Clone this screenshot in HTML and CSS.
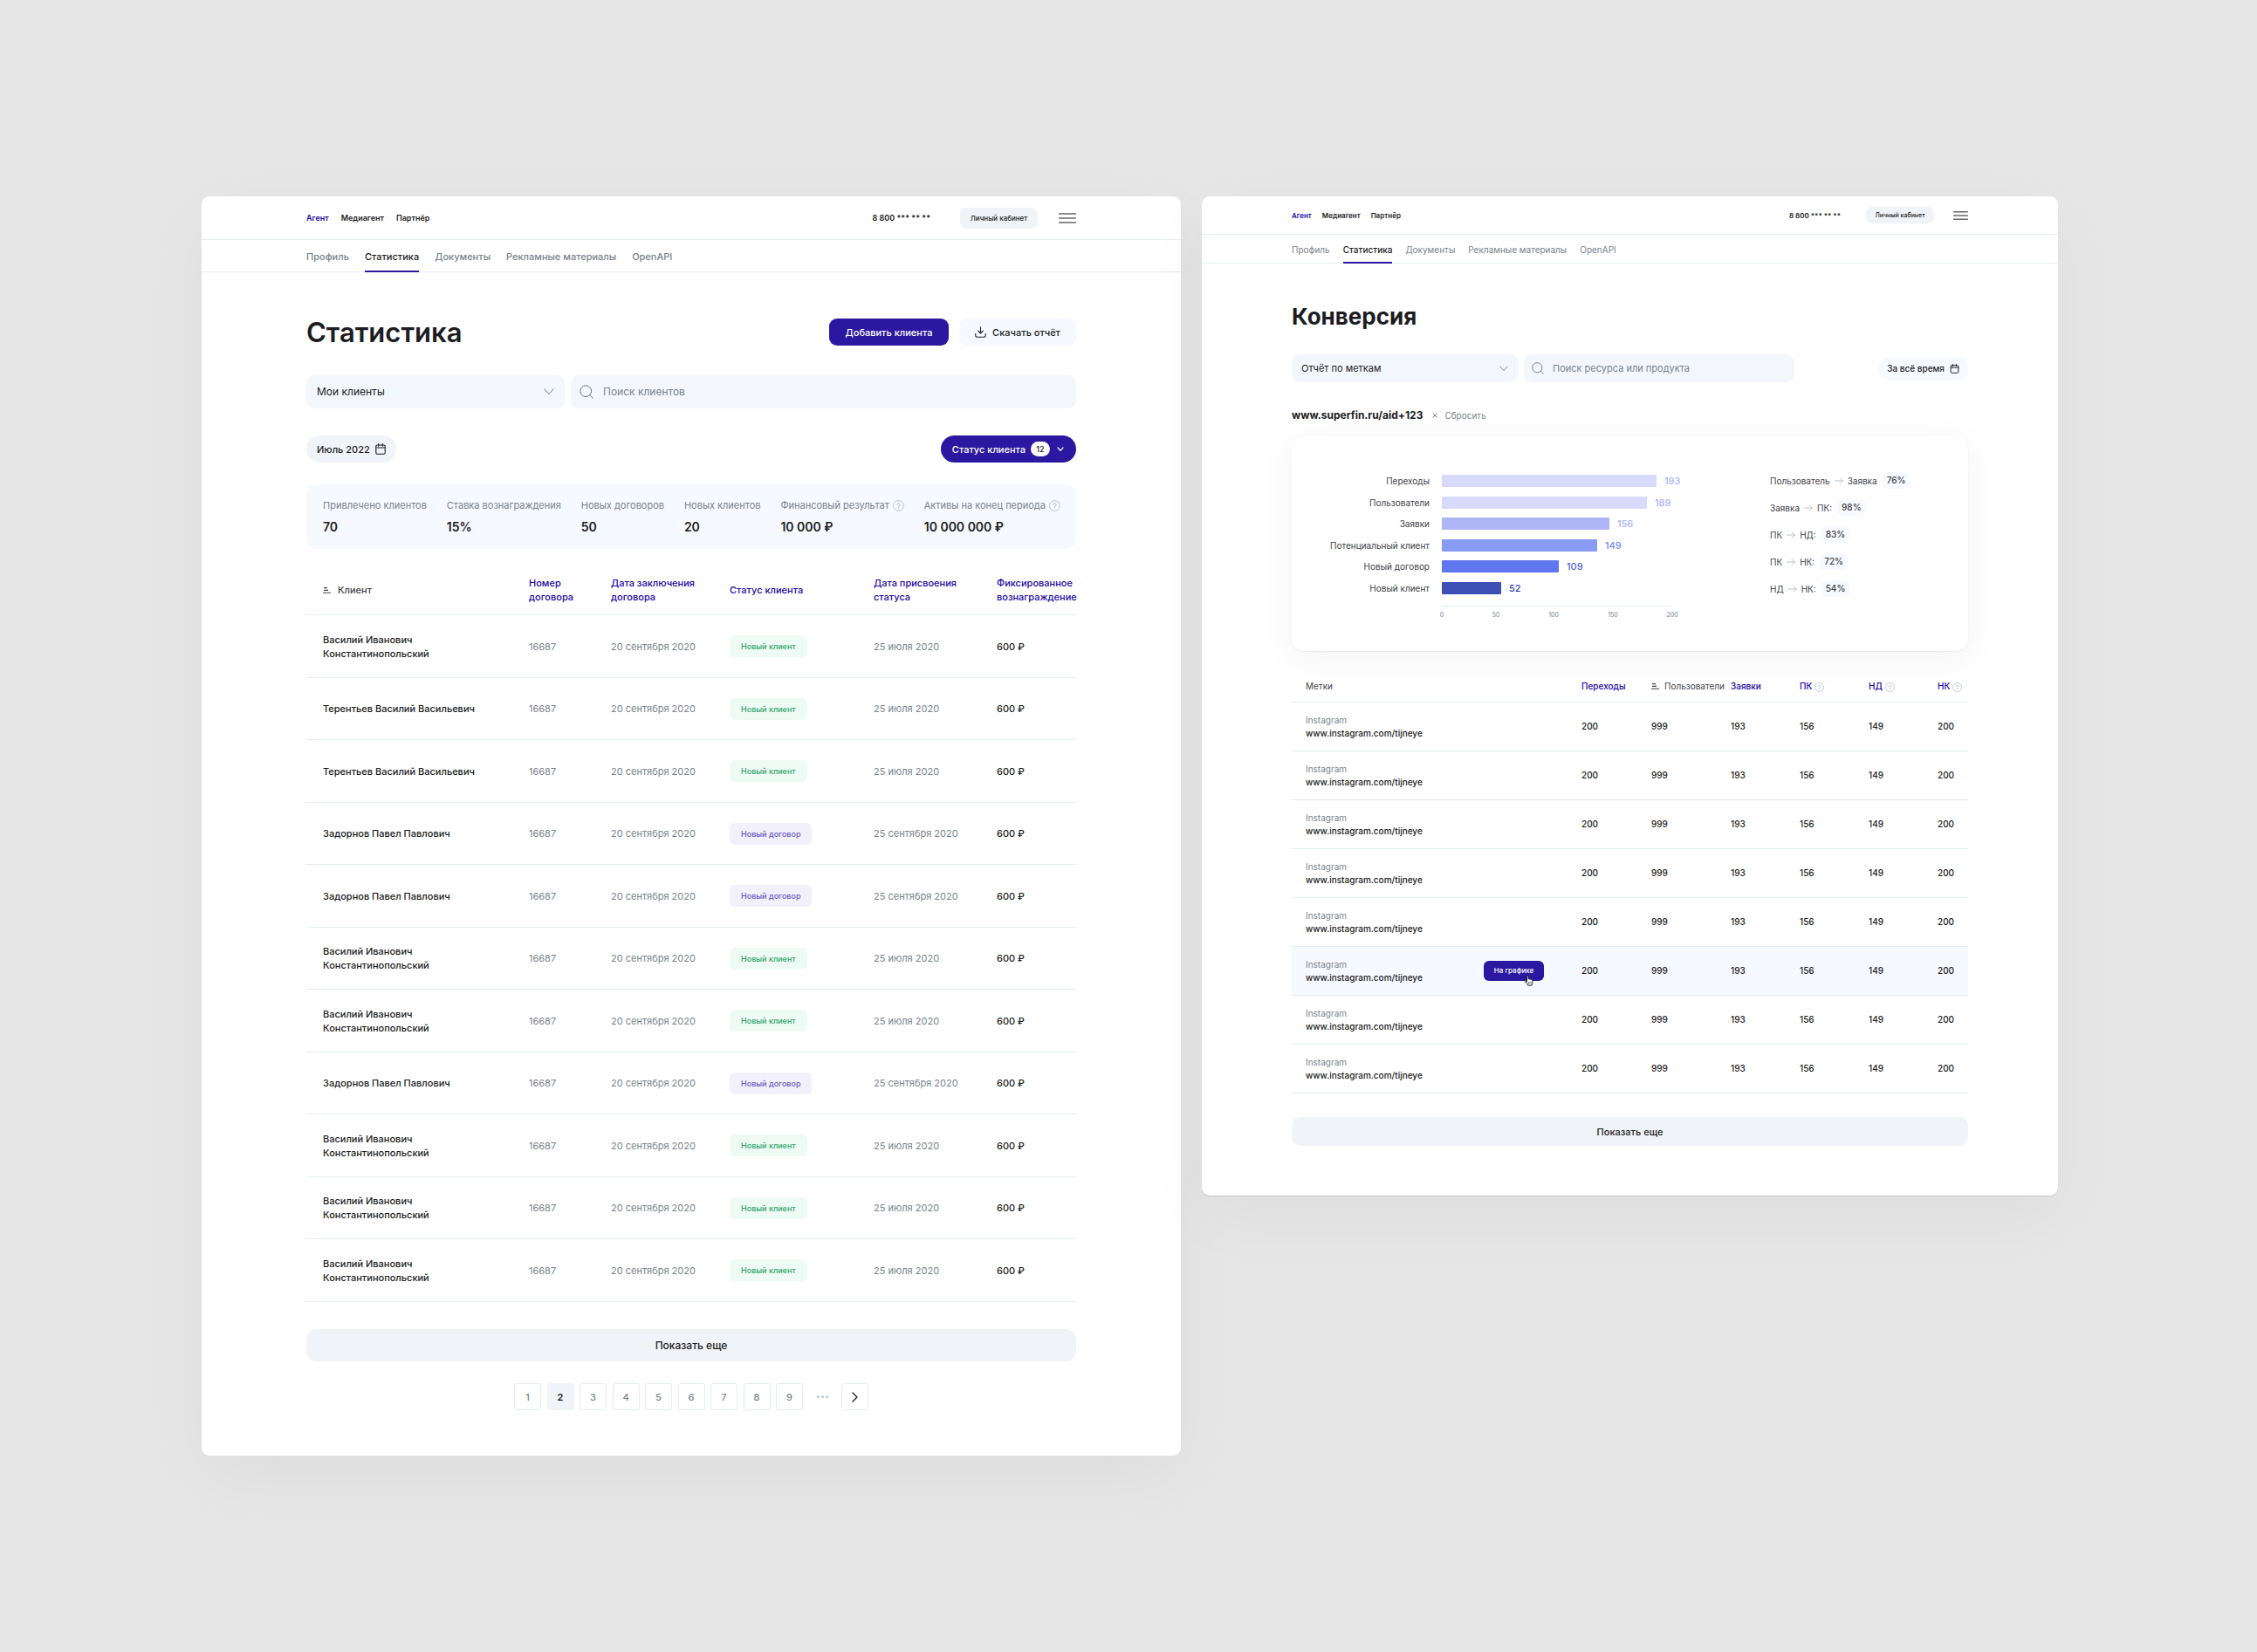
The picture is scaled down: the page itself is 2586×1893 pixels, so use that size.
FILE: index.html
```html
<!DOCTYPE html>
<html lang="ru">
<head>
<meta charset="utf-8">
<meta name="viewport" content="width=device-width, initial-scale=1">
<title>Статистика и конверсия</title>
<link rel="stylesheet" href="styles.css">
</head>
<body>
<svg class="sprite" aria-hidden="true">
  <symbol id="burger" viewBox="0 0 20 12"><path d="M0 1h20M0 6h20M0 11h20" stroke="currentColor" stroke-width="1.2" fill="none"/></symbol>
  <symbol id="chevron" viewBox="0 0 12 8"><path d="M1 1l5 5.5L11 1" stroke="currentColor" fill="none" stroke-linecap="round" stroke-linejoin="round"/></symbol>
  <symbol id="chevron-small" viewBox="0 0 8 6"><path d="M1 1l3 3.3L7 1" stroke="currentColor" stroke-width="1.2" fill="none" stroke-linecap="round" stroke-linejoin="round"/></symbol>
  <symbol id="search" viewBox="0 0 16 16"><circle cx="7.2" cy="7.2" r="6.4" stroke="currentColor" fill="none"/><path d="M11.8 11.8l3.4 3.4" stroke="currentColor" stroke-linecap="round"/></symbol>
  <symbol id="calendar" viewBox="0 0 12 13"><path d="M2.2 2h7.6c.8 0 1.4.6 1.4 1.4v7.4c0 .8-.6 1.4-1.4 1.4H2.2c-.8 0-1.4-.6-1.4-1.4V3.4C.8 2.600 1.400 2 2.200 2zM1 5h10M3.700.6v2.600M8.300.6v2.600" stroke="currentColor" stroke-width="1.1" fill="none" stroke-linecap="round"/></symbol>
  <symbol id="download" viewBox="0 0 13 13"><path d="M6.500.7v7M3.600 5.200l2.900 2.800 2.900-2.800M.8 8.300v2.200c0 1 .7 1.700 1.700 1.700h8c1 0 1.700-.7 1.700-1.700V8.300" stroke="currentColor" stroke-width="1.1" fill="none" stroke-linecap="round" stroke-linejoin="round"/></symbol>
  <symbol id="help" viewBox="0 0 13 13"><circle cx="6.500" cy="6.500" r="5.900" stroke="currentColor" fill="none"/><path d="M4.900 5.300c.1-1 .8-1.500 1.700-1.500s1.600.6 1.600 1.400c0 1.100-1.600 1.200-1.600 2.300M6.600 8.900v.5" stroke="currentColor" stroke-width="1.1" fill="none" stroke-linecap="round"/></symbol>
  <symbol id="sort" viewBox="0 0 9 7"><path d="M1 .6h4M1 3.400h5M0 6.200h9" stroke="currentColor" stroke-width="1.1" fill="none"/></symbol>
  <symbol id="arrow" viewBox="0 0 10 8"><path d="M.5 4h9M6 .8L9.400 4 6 7.200" stroke="currentColor" fill="none" stroke-linecap="round" stroke-linejoin="round"/></symbol>
  <symbol id="cross" viewBox="0 0 6 6"><path d="M.5.5l5 5M5.500.5l-5 5" stroke="currentColor" fill="none"/></symbol>
  <symbol id="next" viewBox="0 0 7 12"><path d="M1 1l5 5-5 5" stroke="currentColor" stroke-width="1.300" fill="none" stroke-linecap="round" stroke-linejoin="round"/></symbol>
  <symbol id="hand" viewBox="0 0 12 13"><path d="M3.400 8.300V1.900c0-1.300 1.700-1.300 1.700 0v3.200c.3-.9 1.600-.7 1.700.2.300-.8 1.500-.6 1.600.2.400-.6 1.500-.4 1.500.6v2.700c0 1.300-.7 1.700-.7 3.300H4.500c0-1.300-1.200-2.100-3.300-4.700-.8-1 .4-1.900 1.200-1.100z" fill="#fff" stroke="#111" stroke-width=".9" stroke-linejoin="round"/><path d="M5.500 8.200v2.200M6.900 8.200v2.200M8.200 8.200v2.200" stroke="#111" stroke-width=".6"/></symbol>
</svg>

<main class="board">

<article class="panel panel-stats">
  <header class="topbar">
    <nav class="roles"><a href="#" class="on">Агент</a><a href="#">Медиагент</a><a href="#">Партнёр</a></nav>
    <span class="phone">8 800 *** ** **</span>
    <button class="cabinet">Личный кабинет</button>
    <button class="burger" aria-label="Меню"><svg><use href="#burger"/></svg></button>
  </header>
  <nav class="tabs"><a href="#">Профиль</a><a href="#" class="on">Статистика</a><a href="#">Документы</a><a href="#">Рекламные материалы</a><a href="#">OpenAPI</a></nav>

  <section class="content">
    <div class="heading">
      <h1>Статистика</h1>
      <button class="btn primary">Добавить клиента</button>
      <button class="btn light"><svg class="i-download"><use href="#download"/></svg>Скачать отчёт</button>
    </div>

    <div class="fields">
      <div class="select"><select aria-label="Список клиентов"><option>Мои клиенты</option></select><svg class="i-chevron"><use href="#chevron"/></svg></div>
      <label class="search"><svg class="i-search"><use href="#search"/></svg><input type="text" placeholder="Поиск клиентов" aria-label="Поиск клиентов"></label>
    </div>

    <div class="filters">
      <button class="pill">Июль 2022<svg class="i-calendar"><use href="#calendar"/></svg></button>
      <button class="pill status">Статус клиента<span class="count">12</span><svg class="i-small"><use href="#chevron-small"/></svg></button>
    </div>

    <dl class="summary">
      <div><dt>Привлечено клиентов</dt><dd>70</dd></div>
      <div><dt>Ставка вознаграждения</dt><dd>15%</dd></div>
      <div><dt>Новых договоров</dt><dd>50</dd></div>
      <div><dt>Новых клиентов</dt><dd>20</dd></div>
      <div><dt>Финансовый результат<svg class="i-help"><use href="#help"/></svg></dt><dd>10 000 ₽</dd></div>
      <div><dt>Активы на конец периода<svg class="i-help"><use href="#help"/></svg></dt><dd>10 000 000 ₽</dd></div>
    </dl>

    <table class="clients">
      <colgroup><col><col class="c-number"><col class="c-date"><col class="c-status"><col class="c-set"><col class="c-fee"></colgroup>
      <thead><tr><th class="sorted"><svg class="i-sort"><use href="#sort"/></svg>Клиент</th><th>Номер<br>договора</th><th>Дата заключения<br>договора</th><th>Статус клиента</th><th>Дата присвоения<br>статуса</th><th>Фиксированное<br>вознаграждение</th></tr></thead>
      <tbody>
        <tr><td>Василий Иванович<br>Константинопольский</td><td>16687</td><td>20 сентября 2020</td><td><span class="tag">Новый клиент</span></td><td>25 июля 2020</td><td>600 ₽</td></tr>
        <tr><td>Терентьев Василий Васильевич</td><td>16687</td><td>20 сентября 2020</td><td><span class="tag">Новый клиент</span></td><td>25 июля 2020</td><td>600 ₽</td></tr>
        <tr><td>Терентьев Василий Васильевич</td><td>16687</td><td>20 сентября 2020</td><td><span class="tag">Новый клиент</span></td><td>25 июля 2020</td><td>600 ₽</td></tr>
        <tr><td>Задорнов Павел Павлович</td><td>16687</td><td>20 сентября 2020</td><td><span class="tag deal">Новый договор</span></td><td>25 сентября 2020</td><td>600 ₽</td></tr>
        <tr><td>Задорнов Павел Павлович</td><td>16687</td><td>20 сентября 2020</td><td><span class="tag deal">Новый договор</span></td><td>25 сентября 2020</td><td>600 ₽</td></tr>
        <tr><td>Василий Иванович<br>Константинопольский</td><td>16687</td><td>20 сентября 2020</td><td><span class="tag">Новый клиент</span></td><td>25 июля 2020</td><td>600 ₽</td></tr>
        <tr><td>Василий Иванович<br>Константинопольский</td><td>16687</td><td>20 сентября 2020</td><td><span class="tag">Новый клиент</span></td><td>25 июля 2020</td><td>600 ₽</td></tr>
        <tr><td>Задорнов Павел Павлович</td><td>16687</td><td>20 сентября 2020</td><td><span class="tag deal">Новый договор</span></td><td>25 сентября 2020</td><td>600 ₽</td></tr>
        <tr><td>Василий Иванович<br>Константинопольский</td><td>16687</td><td>20 сентября 2020</td><td><span class="tag">Новый клиент</span></td><td>25 июля 2020</td><td>600 ₽</td></tr>
        <tr><td>Василий Иванович<br>Константинопольский</td><td>16687</td><td>20 сентября 2020</td><td><span class="tag">Новый клиент</span></td><td>25 июля 2020</td><td>600 ₽</td></tr>
        <tr><td>Василий Иванович<br>Константинопольский</td><td>16687</td><td>20 сентября 2020</td><td><span class="tag">Новый клиент</span></td><td>25 июля 2020</td><td>600 ₽</td></tr>
      </tbody>
    </table>

    <button class="more">Показать еще</button>

    <nav class="pages" aria-label="Страницы">
      <a href="#">1</a><a href="#" class="on" aria-current="page">2</a><a href="#">3</a><a href="#">4</a><a href="#">5</a><a href="#">6</a><a href="#">7</a><a href="#">8</a><a href="#">9</a>
      <span class="dots"><i></i><i></i><i></i></span>
      <a href="#" class="next" aria-label="Дальше"><svg><use href="#next"/></svg></a>
    </nav>
  </section>
</article>

<article class="panel panel-conversion">
  <header class="topbar">
    <nav class="roles"><a href="#" class="on">Агент</a><a href="#">Медиагент</a><a href="#">Партнёр</a></nav>
    <span class="phone">8 800 *** ** **</span>
    <button class="cabinet">Личный кабинет</button>
    <button class="burger" aria-label="Меню"><svg><use href="#burger"/></svg></button>
  </header>
  <nav class="tabs"><a href="#">Профиль</a><a href="#" class="on">Статистика</a><a href="#">Документы</a><a href="#">Рекламные материалы</a><a href="#">OpenAPI</a></nav>

  <section class="content">
    <div class="heading"><h1>Конверсия</h1></div>

    <div class="fields">
      <div class="select"><select aria-label="Вид отчёта"><option>Отчёт по меткам</option></select><svg class="i-chevron"><use href="#chevron"/></svg></div>
      <label class="search"><svg class="i-search"><use href="#search"/></svg><input type="text" placeholder="Поиск ресурса или продукта" aria-label="Поиск ресурса или продукта"></label>
      <button class="pill">За всё время<svg class="i-calendar"><use href="#calendar"/></svg></button>
    </div>

    <div class="source"><h2>www.superfin.ru/aid+123</h2><button class="reset"><svg class="i-cross"><use href="#cross"/></svg>Сбросить</button></div>

    <div class="card">
      <div class="chart">
        <ul class="bars">
          <li class="b1"><span class="name">Переходы</span><span class="bar" style="width:246px"></span><span class="value">193</span></li>
          <li class="b2"><span class="name">Пользователи</span><span class="bar" style="width:235px"></span><span class="value">189</span></li>
          <li class="b3"><span class="name">Заявки</span><span class="bar" style="width:192px"></span><span class="value">156</span></li>
          <li class="b4"><span class="name">Потенциальный клиент</span><span class="bar" style="width:178px"></span><span class="value">149</span></li>
          <li class="b5"><span class="name">Новый договор</span><span class="bar" style="width:134px"></span><span class="value">109</span></li>
          <li class="b6"><span class="name">Новый клиент</span><span class="bar" style="width:68px"></span><span class="value">52</span></li>
        </ul>
        <div class="axis"><span>0</span><span>50</span><span>100</span><span>150</span><span>200</span></div>
      </div>
      <ul class="steps">
        <li>Пользователь<svg class="i-arrow"><use href="#arrow"/></svg>Заявка<b>76%</b></li>
        <li>Заявка<svg class="i-arrow"><use href="#arrow"/></svg>ПК:<b>98%</b></li>
        <li>ПК<svg class="i-arrow"><use href="#arrow"/></svg>НД:<b>83%</b></li>
        <li>ПК<svg class="i-arrow"><use href="#arrow"/></svg>НК:<b>72%</b></li>
        <li>НД<svg class="i-arrow"><use href="#arrow"/></svg>НК:<b>54%</b></li>
      </ul>
    </div>

    <table class="marks">
      <colgroup><col><col class="c-visits"><col class="c-users"><col class="c-step"><col class="c-step"><col class="c-step"><col class="c-last"></colgroup>
      <thead><tr><th class="plain">Метки</th><th>Переходы</th><th class="sorted"><svg class="i-sort"><use href="#sort"/></svg>Пользователи</th><th>Заявки</th><th>ПК<svg class="i-help"><use href="#help"/></svg></th><th>НД<svg class="i-help"><use href="#help"/></svg></th><th>НК<svg class="i-help"><use href="#help"/></svg></th></tr></thead>
      <tbody>
        <tr><td><small>Instagram</small><a href="#">www.instagram.com/tijneye</a></td><td>200</td><td>999</td><td>193</td><td>156</td><td>149</td><td>200</td></tr>
        <tr><td><small>Instagram</small><a href="#">www.instagram.com/tijneye</a></td><td>200</td><td>999</td><td>193</td><td>156</td><td>149</td><td>200</td></tr>
        <tr><td><small>Instagram</small><a href="#">www.instagram.com/tijneye</a></td><td>200</td><td>999</td><td>193</td><td>156</td><td>149</td><td>200</td></tr>
        <tr><td><small>Instagram</small><a href="#">www.instagram.com/tijneye</a></td><td>200</td><td>999</td><td>193</td><td>156</td><td>149</td><td>200</td></tr>
        <tr><td><small>Instagram</small><a href="#">www.instagram.com/tijneye</a></td><td>200</td><td>999</td><td>193</td><td>156</td><td>149</td><td>200</td></tr>
        <tr class="active"><td><div class="mark"><div><small>Instagram</small><a href="#">www.instagram.com/tijneye</a></div><button class="show">На графике<svg class="i-hand"><use href="#hand"/></svg></button></div></td><td>200</td><td>999</td><td>193</td><td>156</td><td>149</td><td>200</td></tr>
        <tr><td><small>Instagram</small><a href="#">www.instagram.com/tijneye</a></td><td>200</td><td>999</td><td>193</td><td>156</td><td>149</td><td>200</td></tr>
        <tr><td><small>Instagram</small><a href="#">www.instagram.com/tijneye</a></td><td>200</td><td>999</td><td>193</td><td>156</td><td>149</td><td>200</td></tr>
      </tbody>
    </table>

    <button class="more">Показать еще</button>
  </section>
</article>

</main>
</body>
</html>
```
FILE: styles.css
```css
:root {
  --ink: #1c1c22;
  --soft: #3f4249;
  --muted: #7a838c;
  --accent: #2c17a0;
  --link: #2107a6;
  --line: #e4edf0;
  --field: #f3f7fc;
  --pale: #f6f9ff;
  --grey: #f0f3f7;
  --icon: #b9c3cb;
}

* { box-sizing: border-box; margin: 0; padding: 0; }

body {
  background: #e6e6e6;
  color: var(--ink);
  font: 500 11px/16px Inter, "Liberation Sans", sans-serif;
}

a { color: inherit; text-decoration: none; }
button, input, select { font: inherit; color: inherit; border: 0; background: none; }
button { display: flex; align-items: center; justify-content: center; cursor: pointer; }
svg { display: block; flex: none; }
ul { list-style: none; }
.sprite { position: absolute; width: 0; height: 0; }

.board {
  display: flex;
  align-items: flex-start;
  gap: 24px;
  padding: 225px 228px 225px 231px;
}

.panel {
  min-width: 0;
  background: #fff;
  border-radius: 9px;
  box-shadow: 0 24px 80px rgba(0, 0, 0, .04);
}
.panel-stats { flex: 1122 1 0; --side: 120px; }
.panel-conversion {
  flex: 981 1 0;
  --side: 103px;
  box-shadow: 0 1px 0 #c4c4c4, 0 24px 80px rgba(0, 0, 0, .04);
}

/* Top bar and tabs */
.topbar {
  display: flex;
  align-items: center;
  height: 50px;
  padding: 0 var(--side);
  border-bottom: 1px solid var(--line);
  font-size: 9px;
  font-weight: 600;
}
.roles { display: flex; gap: 14px; margin-right: auto; }
.roles .on { color: var(--link); }
.cabinet {
  width: 89px;
  height: 24px;
  margin: 0 24px 0 34px;
  border-radius: 8px;
  background: var(--grey);
  font-size: 8px;
  font-weight: 500;
}
.burger svg { width: 20px; height: 12px; }

.tabs {
  display: flex;
  gap: 18px;
  height: 37px;
  padding: 0 var(--side);
  border-bottom: 1px solid var(--line);
  color: var(--muted);
}
.tabs a { height: 37px; line-height: 38px; }
.tabs .on { color: var(--ink); border-bottom: 2px solid var(--accent); }

.content { padding: 53px var(--side) 52px; }

/* Heading and controls */
.heading { display: flex; align-items: center; gap: 12px; height: 31px; }
h1 { margin-right: auto; font-size: 31px; line-height: 31px; font-weight: 600; }
.btn { height: 31px; border-radius: 9px; gap: 7px; }
.primary { width: 137px; background: var(--accent); color: #fff; }
.light { width: 134px; background: var(--pale); }
.i-download { width: 13px; height: 13px; }

.fields { display: flex; align-items: center; gap: 7px; margin-top: 34px; font-size: 12px; font-weight: 400; }
.select { display: grid; flex: 0 0 296px; align-items: center; }
.select > * { grid-area: 1 / 1; }
.select select {
  height: 38px;
  padding: 0 12px;
  border-radius: 9px;
  background: var(--field);
  appearance: none;
}
.i-chevron { justify-self: end; width: 12px; height: 8px; margin-right: 12px; color: #6c757d; pointer-events: none; }
.search {
  display: flex;
  flex: 1;
  align-items: center;
  gap: 11px;
  height: 38px;
  padding: 0 10px;
  border-radius: 9px;
  background: var(--field);
}
.search input { flex: 1; min-width: 0; outline: 0; }
.search input::placeholder { color: var(--muted); opacity: 1; }
.i-search { width: 16px; height: 16px; color: #6c757d; }

.filters { display: flex; justify-content: space-between; margin-top: 31px; }
.pill { gap: 6px; height: 31px; padding: 0 12px; border-radius: 16px; background: var(--grey); }
.status { background: var(--accent); color: #fff; padding: 0 14px 0 13px; }
.count {
  width: 22px;
  border-radius: 9px;
  background: #fff;
  color: var(--ink);
  font-size: 9px;
  line-height: 17px;
}
.i-calendar { width: 12px; height: 13px; }
.i-small { width: 8px; height: 6px; margin-left: 2px; }

.summary {
  display: flex;
  justify-content: space-between;
  height: 74px;
  margin-top: 25px;
  padding: 16px 18px 16px 19px;
  border-radius: 12px;
  background: var(--pale);
}
dt { display: flex; align-items: center; gap: 4px; color: var(--muted); font-weight: 400; }
dd { margin-top: 7px; font-size: 14px; line-height: 20px; font-weight: 600; }
.i-help { width: 13px; height: 13px; color: var(--icon); }

/* Tables */
table { width: 100%; table-layout: fixed; border-collapse: separate; border-spacing: 0; }
th, td { border-bottom: 1px solid var(--line); text-align: left; vertical-align: middle; white-space: nowrap; }
th { color: var(--link); font-weight: 500; }
th svg { display: inline-block; vertical-align: -3px; margin-left: 3px; }
th.sorted, th.plain { color: var(--soft); }
.i-sort { width: 9px; height: 7px; }
th .i-sort { vertical-align: 0; margin: 0 8px 0 0; }

.clients { margin-top: 19px; }
.clients th { height: 57px; }
.clients td { height: 72px; color: var(--muted); font-weight: 400; }
.clients tr:nth-child(even) td { height: 71px; }
.clients th:first-child, .clients td:first-child { padding-left: 19px; }
.clients td:first-child, .clients td:last-child { color: var(--ink); font-weight: 500; }
.c-number { width: 94px; }
.c-date { width: 136px; }
.c-status { width: 165px; }
.c-set { width: 141px; }
.c-fee { width: 91px; }
.tag {
  display: inline-block;
  padding: 0 13px;
  border-radius: 6px;
  background: #edfbf4;
  color: #34a36c;
  font-size: 9px;
  line-height: 25px;
  font-weight: 500;
}
.deal { background: #f1f0fb; color: #6a58c4; }

.more {
  width: 100%;
  height: 37px;
  margin-top: 31px;
  border-radius: 12px;
  background: var(--grey);
  font-size: 12px;
}

.pages { display: flex; justify-content: space-between; max-width: 406px; margin: 25px auto 0; color: var(--muted); }
.pages a {
  display: flex;
  align-items: center;
  justify-content: center;
  width: 31px;
  height: 31px;
  border: 1px solid var(--line);
  border-radius: 3px;
}
.pages .on { border-color: var(--grey); background: var(--grey); color: var(--ink); font-weight: 600; }
.dots { display: flex; align-items: center; justify-content: center; gap: 2px; width: 31px; }
.dots i { width: 3px; height: 3px; border-radius: 50%; background: var(--icon); }
.next svg { width: 7px; height: 12px; color: var(--ink); }

/* Conversion panel: a denser version of the same parts */
.panel-conversion .topbar { height: 44px; font-size: 8px; }
.panel-conversion .roles { gap: 12px; }
.panel-conversion .cabinet { width: 78px; height: 19px; margin: 0 22px 0 29px; border-radius: 7px; font-size: 7px; }
.panel-conversion .burger svg { width: 17px; height: 10px; }
.panel-conversion .tabs { gap: 15px; height: 33px; font-size: 10px; font-weight: 400; }
.panel-conversion .tabs a { height: 33px; line-height: 34px; }
.panel-conversion .tabs .on { font-weight: 500; }
.panel-conversion .content { padding: 45px var(--side) 57px; }
.panel-conversion .heading { height: 30px; }
.panel-conversion h1 { font-size: 26px; font-weight: 700; }
.panel-conversion .fields { gap: 6px; margin-top: 29px; font-size: 11px; }
.panel-conversion .select { flex-basis: 260px; }
.panel-conversion .select select { height: 32px; padding: 0 11px; }
.panel-conversion .i-chevron { width: 10px; height: 7px; }
.panel-conversion .search { flex: 0 0 310px; gap: 10px; height: 32px; padding: 0 9px; }
.panel-conversion .i-search { width: 14px; height: 14px; }
.panel-conversion .pill {
  height: 27px;
  margin-left: auto;
  padding: 0 10px;
  background: var(--pale);
  font-size: 10px;
  font-weight: 500;
}
.panel-conversion .i-calendar { width: 11px; height: 11px; }

.source { display: flex; align-items: center; gap: 11px; height: 20px; margin-top: 28px; }
h2 { font-size: 12px; font-weight: 700; }
.reset { gap: 8px; color: var(--muted); font-size: 10px; font-weight: 400; }
.i-cross { width: 6px; height: 6px; }

.card {
  display: flex;
  height: 246px;
  margin-top: 14px;
  border-radius: 14px;
  background: #fff;
  box-shadow: 0 8px 44px rgba(0, 0, 0, .05), 0 1px 2px rgba(0, 0, 0, .06);
  color: var(--soft);
  font-size: 10px;
  font-weight: 400;
}
.chart { flex: 0 0 548px; padding-top: 44px; }
.bars { display: flex; flex-direction: column; justify-content: space-between; height: 137px; line-height: 14px; }
.bars li { display: flex; align-items: center; height: 14px; }
.name { width: 158px; margin-right: 14px; text-align: right; }
.bar { height: 14px; border-radius: 1px; }
.value { margin-left: 9px; font-size: 11px; font-weight: 500; }
.axis {
  display: grid;
  grid-template-columns: 62px 66px 68px 68px 0;
  width: 265px;
  margin: 13px 0 0 172px;
  padding-top: 2px;
  border-top: 1px solid var(--line);
  color: var(--muted);
  font-size: 7px;
}
.axis span { display: flex; justify-content: center; width: 0; }
.b1 .bar, .b2 .bar { background: #d8dafb; }
.b3 .bar { background: #aeb5f6; }
.b4 .bar { background: #889cf4; }
.b5 .bar { background: #5f76ee; }
.b6 .bar { background: #3d4fb5; }
.b1 .value, .b2 .value, .b3 .value { color: #a9b2f6; }
.b4 .value { color: #7388f0; }
.b5 .value { color: #4a61e6; }
.b6 .value { color: #2d3da8; }

.steps { display: flex; flex-direction: column; gap: 12px; padding-top: 41px; }
.steps li { display: flex; align-items: center; height: 19px; }
.i-arrow { width: 10px; height: 8px; margin: 0 5px; color: var(--icon); }
.steps b { margin-left: 6px; padding: 0 5px; border-radius: 6px; background: var(--pale); font-weight: 500; line-height: 19px; }

.marks { margin-top: 22px; font-size: 10px; line-height: 15px; }
.marks th { height: 37px; }
.marks th.sorted, .marks th.plain { font-weight: 400; }
.marks td { height: 56px; }
.marks th:first-child, .marks td:first-child { padding-left: 16px; }
.marks small { display: block; color: var(--muted); font-size: 10px; font-weight: 400; }
.marks .i-help { width: 11px; height: 11px; }
.marks .i-sort { margin-right: 6px; }
.marks .active td { background: var(--pale); }
.c-visits { width: 80px; }
.c-users { width: 91px; }
.c-step { width: 79px; }
.c-last { width: 35px; }
.mark { display: flex; align-items: center; justify-content: space-between; padding-right: 43px; }
.show {
  position: relative;
  width: 69px;
  height: 23px;
  border-radius: 6px;
  background: var(--accent);
  color: #fff;
  font-size: 8px;
}
.i-hand { position: absolute; right: 11px; bottom: -6px; width: 12px; height: 13px; }

.panel-conversion .more { height: 33px; margin-top: 27px; border-radius: 10px; font-size: 11px; }
```
